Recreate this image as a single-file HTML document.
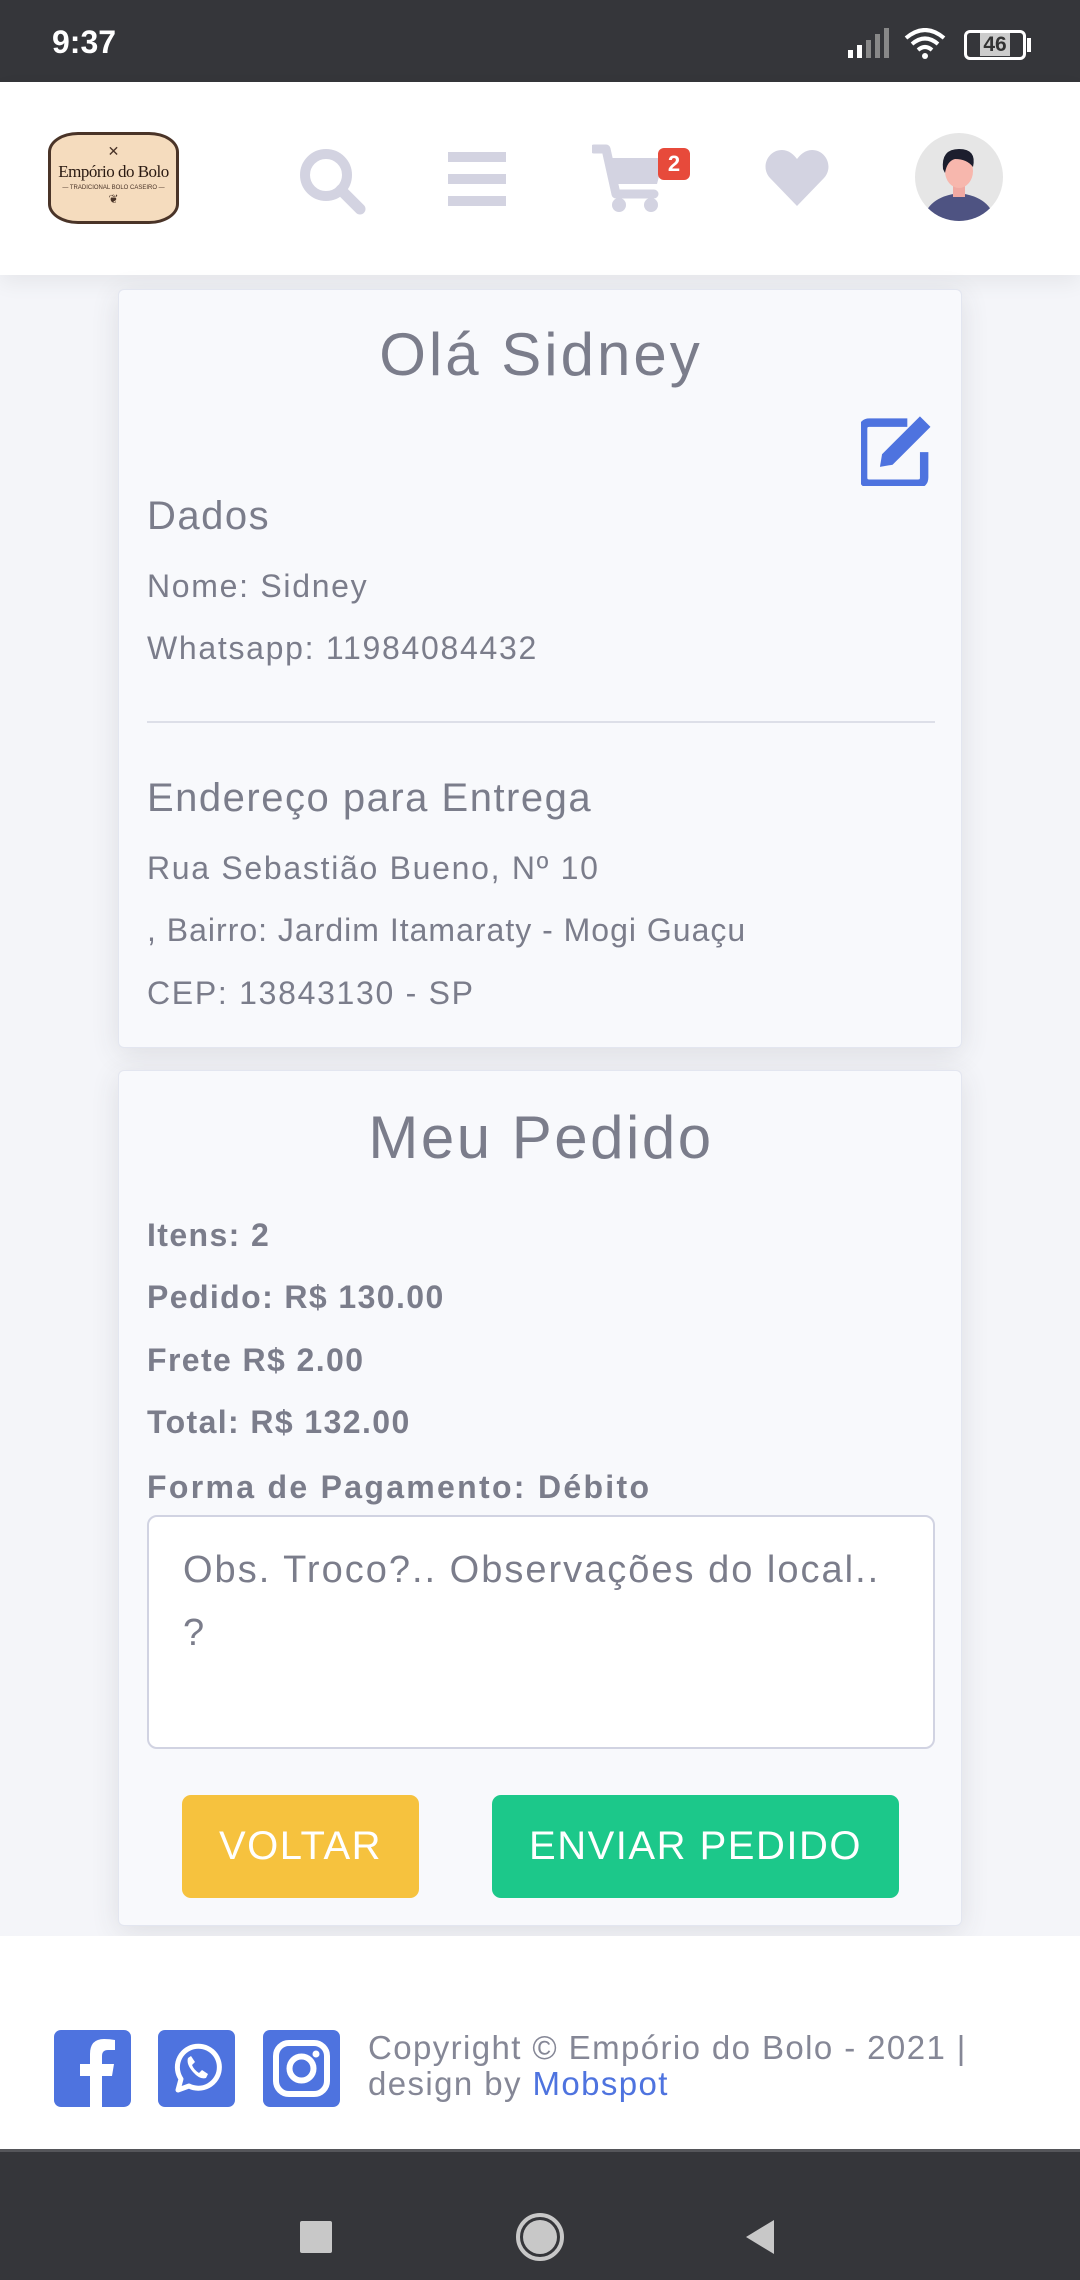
<!DOCTYPE html>
<html><head><meta charset="utf-8">
<style>
*{box-sizing:border-box;margin:0;padding:0}
body{width:1080px;height:2280px;overflow:hidden;background:#f4f5f9;font-family:"Liberation Sans",sans-serif;color:#7b7d8b;position:relative}
.abs{position:absolute}
.status{left:0;top:0;width:1080px;height:82px;background:#35363a;color:#fff}
.header{left:0;top:82px;width:1080px;height:193px;background:#fff;box-shadow:0 8px 20px rgba(0,0,0,.06)}
.card{background:#f8f9fc;border:1px solid #e3e6f0;border-radius:6px;box-shadow:0 6px 28px rgba(58,59,69,.12)}
.t{position:absolute;white-space:nowrap}
.nav{left:0;top:2149px;width:1080px;height:131px;background:#35363a;border-top:3px solid #55565a}
.btn{position:absolute;border-radius:9px;color:#fff;font-size:40px;text-align:center;line-height:103px;letter-spacing:1.5px}
.r{font-size:32px;letter-spacing:1.7px}
.b{font-size:32px;font-weight:bold;letter-spacing:1.4px}
.h{font-size:40px;letter-spacing:1.5px}
</style></head><body>
<div class="abs status">
 <div class="t" style="left:52px;top:24px;font-size:32px;font-weight:bold">9:37</div>
 <svg class="abs" style="left:848px;top:28px" width="50" height="32"><rect x="0" y="22" width="5" height="8" fill="#fff"/><rect x="9" y="17" width="5" height="13" fill="#fff"/><rect x="18" y="12" width="5" height="18" fill="#888"/><rect x="27" y="6" width="5" height="24" fill="#888"/><rect x="36" y="0" width="5" height="30" fill="#888"/></svg>
 <svg class="abs" style="left:904px;top:28px" width="42" height="32" viewBox="0 0 42 32"><path d="M2 10 Q21 -6 40 10" stroke="#fff" stroke-width="4" fill="none"/><path d="M8 16 Q21 5 34 16" stroke="#fff" stroke-width="4" fill="none"/><path d="M14 22 Q21 16 28 22" stroke="#fff" stroke-width="4" fill="none"/><circle cx="21" cy="28" r="3" fill="#fff"/></svg>
 <div class="abs" style="left:964px;top:30px;width:62px;height:30px;border:3px solid #fff;border-radius:6px;font-size:21px;font-weight:bold;text-align:center;line-height:24px"><span style="background:#ccc;color:#333;padding:0 3px">46</span></div>
 <div class="abs" style="left:1027px;top:38px;width:4px;height:14px;background:#fff"></div>
</div>
<div class="abs header">
 <div class="abs" style="left:48px;top:50px;width:131px;height:92px;background:#f5dcbe;border:3px solid #4a3428;border-radius:30px/20px;text-align:center">
  <div style="font-size:14px;color:#4a3428;margin-top:8px">✕</div>
  <div style="font-family:'Liberation Serif',serif;font-size:17px;color:#2a1a12;margin-top:2px;letter-spacing:-0.5px">Empório do Bolo</div>
  <div style="font-size:6px;color:#4a3428;margin-top:3px">— TRADICIONAL BOLO CASEIRO —</div>
  <div style="font-size:12px;color:#4a3428;margin-top:1px">❦</div>
 </div>
 <svg class="abs" style="left:298px;top:65px" width="68" height="68" viewBox="0 0 68 68"><circle cx="28" cy="28" r="21" stroke="#d3d3e1" stroke-width="10" fill="none"/><path d="M43 43 L62 62" stroke="#d3d3e1" stroke-width="11" stroke-linecap="round"/></svg>
 <div class="abs" style="left:448px;top:70px;width:58px;height:10px;background:#d3d3e1"></div>
 <div class="abs" style="left:448px;top:92px;width:58px;height:10px;background:#d3d3e1"></div>
 <div class="abs" style="left:448px;top:114px;width:58px;height:10px;background:#d3d3e1"></div>
 <svg class="abs" style="left:592px;top:62px" width="80" height="70" viewBox="0 0 80 70"><path d="M2 5 H14 L24 50 H62" stroke="#d3d3e1" stroke-width="9" fill="none" stroke-linecap="round" stroke-linejoin="round"/><path d="M16 14 H72 L65 40 H22 Z" fill="#d3d3e1"/><circle cx="27" cy="61" r="7" fill="#d3d3e1"/><circle cx="59" cy="61" r="7" fill="#d3d3e1"/></svg>
 <div class="abs" style="left:658px;top:66px;width:32px;height:32px;background:#e74a3b;border-radius:6px;color:#fff;font-size:22px;font-weight:bold;text-align:center;line-height:32px">2</div>
 <svg class="abs" style="left:764px;top:66px" width="66" height="60" viewBox="0 0 66 60"><path d="M33 58 L6 30 C-4 19 4 2 18 2 C25 2 30 7 33 11 C36 7 41 2 48 2 C62 2 70 19 60 30 Z" fill="#d3d3e1"/></svg>
 <svg class="abs" style="left:915px;top:51px" width="88" height="88" viewBox="0 0 88 88"><defs><clipPath id="c"><circle cx="44" cy="44" r="44"/></clipPath></defs><g clip-path="url(#c)"><rect width="88" height="88" fill="#e6e6e6"/><path d="M8 88 Q12 64 44 60 Q76 64 80 88Z" fill="#4e5382"/><rect x="38" y="48" width="12" height="16" fill="#f0a9a2"/><ellipse cx="44" cy="38" rx="14" ry="17" fill="#f7b7ad"/><path d="M28 36 Q26 16 44 16 Q62 16 58 34 Q52 26 40 26 Q32 28 30 40Z" fill="#1c1e2e"/></g></svg>
</div>

<div class="abs card" style="left:118px;top:289px;width:844px;height:759px">
 <div class="t" style="left:0;width:844px;text-align:center;top:30px;font-size:60px;letter-spacing:3px">Olá Sidney</div>
 <svg class="abs" style="left:742px;top:124px" width="80" height="72" viewBox="0 0 76 68"><path d="M44 8 H8 Q2 8 2 14 V60 Q2 66 8 66 H54 Q60 66 60 60 V36" stroke="#4e73df" stroke-width="8" fill="none"/><path d="M30 48 L18 50 L20 38 L56 2 L66 12 Z" fill="#4e73df"/></svg>
 <div class="t h" style="left:28px;top:204px">Dados</div>
 <div class="t r" style="left:28px;top:278px">Nome: Sidney</div>
 <div class="t r" style="left:28px;top:340px">Whatsapp: 11984084432</div>
 <div class="abs" style="left:28px;top:431px;width:788px;height:2px;background:#dddfe8"></div>
 <div class="t h" style="left:28px;top:486px">Endereço para Entrega</div>
 <div class="t r" style="left:28px;top:560px">Rua Sebastião Bueno, Nº 10</div>
 <div class="t r" style="left:28px;top:622px;letter-spacing:1px">, Bairro: Jardim Itamaraty - Mogi Guaçu</div>
 <div class="t r" style="left:28px;top:685px">CEP: 13843130 - SP</div>
</div>

<div class="abs card" style="left:118px;top:1070px;width:844px;height:856px">
 <div class="t" style="left:0;width:844px;text-align:center;top:32px;font-size:60px;letter-spacing:2.5px">Meu Pedido</div>
 <div class="t b" style="left:28px;top:146px">Itens: 2</div>
 <div class="t b" style="left:28px;top:208px">Pedido: R$ 130.00</div>
 <div class="t b" style="left:28px;top:271px">Frete R$ 2.00</div>
 <div class="t b" style="left:28px;top:333px">Total: R$ 132.00</div>
 <div class="t b" style="left:28px;top:398px;font-size:32px;letter-spacing:2.3px">Forma de Pagamento: Débito</div>
 <div class="abs" style="left:28px;top:444px;width:788px;height:234px;background:#fff;border:2px solid #d1d3e2;border-radius:10px">
  <div class="t" style="left:34px;top:22px;font-size:38px;line-height:63px;color:#7b7d8b;letter-spacing:2px">Obs. Troco?.. Observações do local..<br>?</div>
 </div>
 <div class="btn" style="left:63px;top:724px;width:237px;height:103px;background:#f6c23e">VOLTAR</div>
 <div class="btn" style="left:373px;top:724px;width:407px;height:103px;background:#1cc88a">ENVIAR PEDIDO</div>
</div>

<div class="abs" style="left:0;top:1936px;width:1080px;height:213px;background:#fff"></div>
<svg class="abs" style="left:54px;top:2030px" width="77" height="77" viewBox="0 0 77 77"><rect width="77" height="77" rx="7" fill="#4e73df"/><path d="M48 77 V46 H58 L60 34 H48 V26 Q48 20 54 20 H61 V10 Q56 9 50 9 Q36 9 36 24 V34 H26 V46 H36 V77Z" fill="#fff"/></svg>
<svg class="abs" style="left:158px;top:2030px" width="77" height="77" viewBox="0 0 77 77"><rect width="77" height="77" rx="7" fill="#4e73df"/><path d="M20 60 L23 49 A21 21 0 1 1 31 56 Z" stroke="#fff" stroke-width="5" fill="none" stroke-linejoin="round"/><path d="M30 28 Q28 34 35 42 Q42 50 48 48 L50 44 L44 40 L41 43 Q36 40 34 35 L37 32 L33 26Z" fill="#fff"/></svg>
<svg class="abs" style="left:263px;top:2030px" width="77" height="77" viewBox="0 0 77 77"><rect width="77" height="77" rx="7" fill="#4e73df"/><rect x="13" y="13" width="51" height="51" rx="13" stroke="#fff" stroke-width="6" fill="none"/><circle cx="38.5" cy="38.5" r="12" stroke="#fff" stroke-width="6" fill="none"/><circle cx="53" cy="24" r="3.5" fill="#fff"/></svg>
<div class="t" style="left:368px;top:2030px;font-size:33px;line-height:36px;color:#858796;letter-spacing:1.4px">Copyright © Empório do Bolo - 2021 |<br>design by <span style="color:#4e73df">Mobspot</span></div>

<div class="abs nav">
 <div class="abs" style="left:300px;top:69px;width:32px;height:32px;background:#c8c8c8;border-radius:2px"></div>
 <div class="abs" style="left:516px;top:61px;width:48px;height:48px;border:4px solid #c8c8c8;border-radius:50%"></div>
 <div class="abs" style="left:523px;top:68px;width:34px;height:34px;background:#c8c8c8;border-radius:50%"></div>
 <svg class="abs" style="left:744px;top:66px" width="32" height="38"><path d="M30 2 V36 L2 19Z" fill="#c8c8c8"/></svg>
</div>
</body></html>
